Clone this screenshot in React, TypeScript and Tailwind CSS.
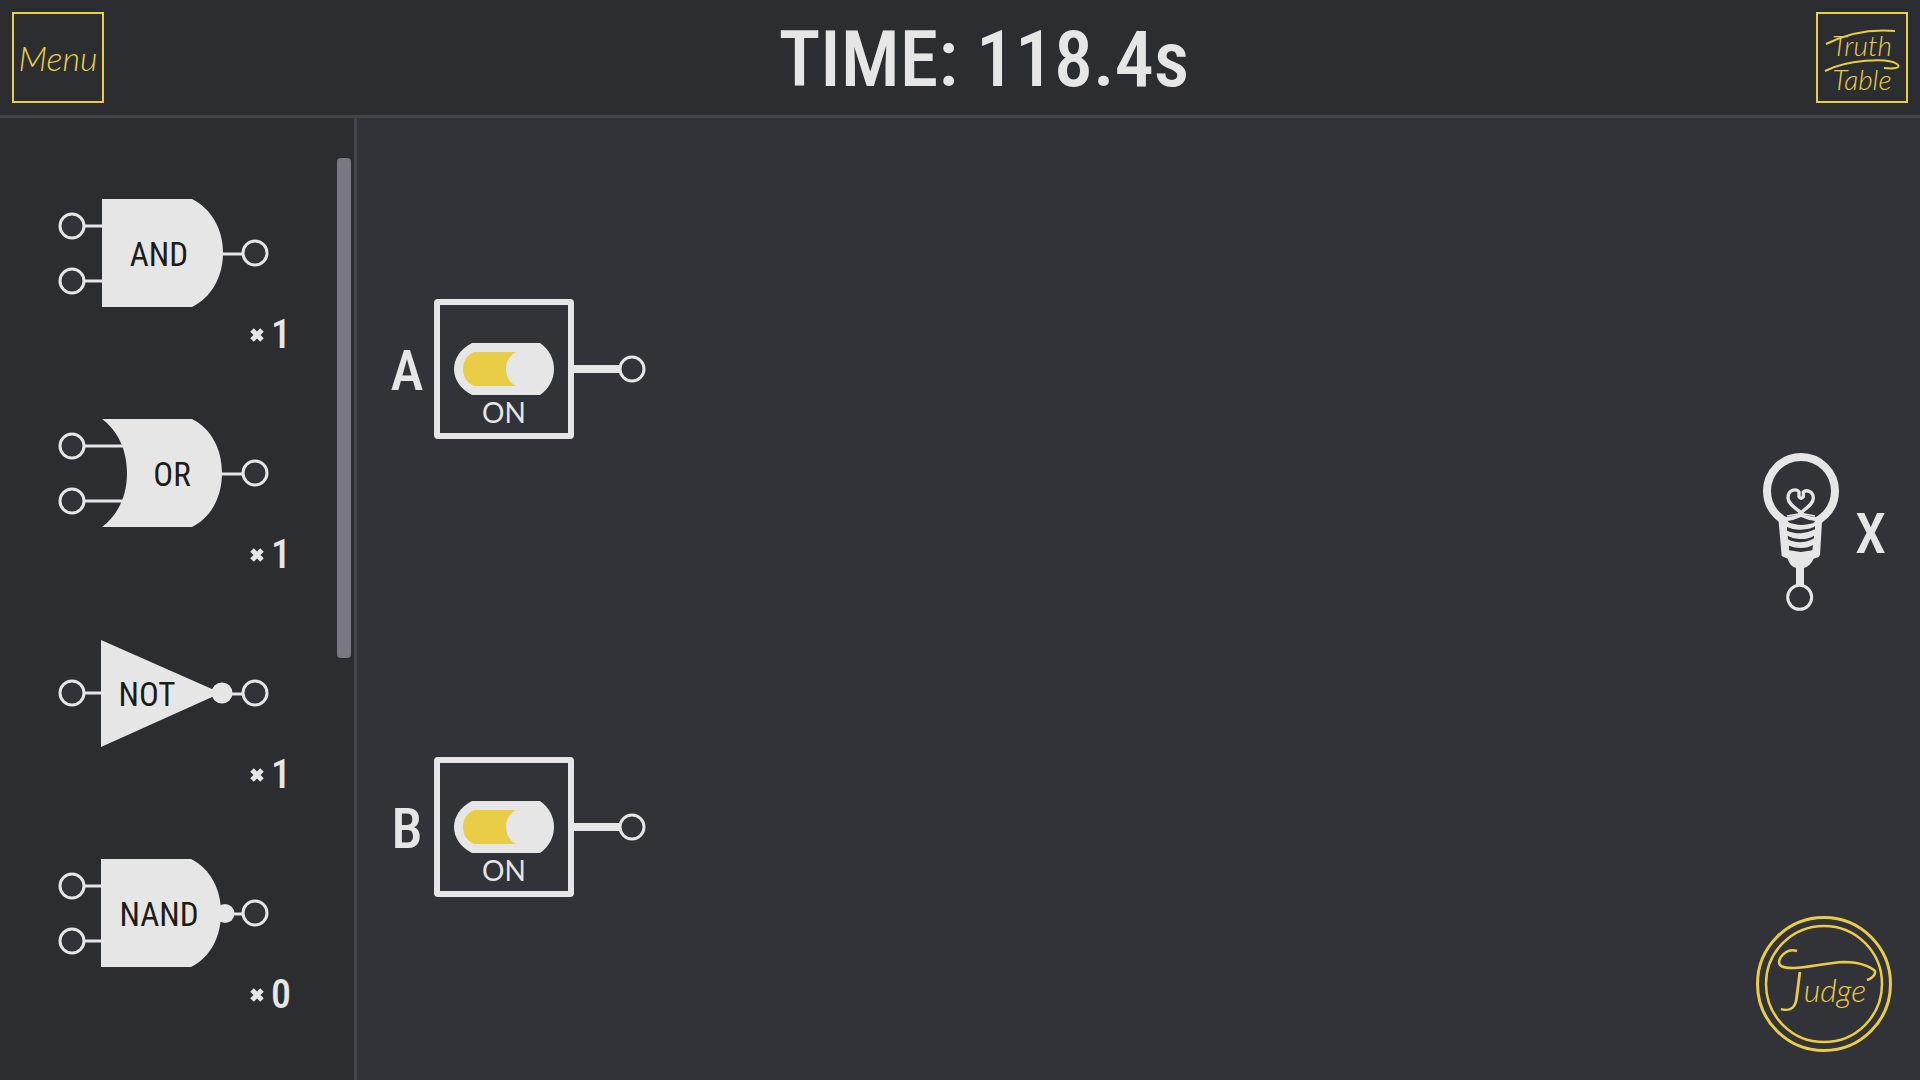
import React, { useState } from 'react';

type GateKind = 'AND' | 'OR' | 'NOT' | 'NAND';

interface GateItem {
  kind: GateKind;
  count: number;
  labelX: number;
}

const gates: GateItem[] = [
  { kind: 'AND', count: 1, labelX: 103 },
  { kind: 'OR', count: 1, labelX: 116 },
  { kind: 'NOT', count: 1, labelX: 91 },
  { kind: 'NAND', count: 0, labelX: 103 },
];

const shapes: Record<GateKind, string> = {
  AND: 'M46 1H136C156 11 167 32 167 55S156 99 136 109H46Z',
  OR: 'M46 1H136C156 11 166 32 166 55S156 99 136 109H46C62 97 71 78 71 55S62 13 46 1Z',
  NOT: 'M45 2L165 55L45 109Z',
  NAND: 'M45 1H135C155 11 165 32 165 55S155 99 135 109H45Z',
};

const Pin: React.FC<{ cx: number; cy: number }> = ({ cx, cy }) => (
  <circle cx={cx} cy={cy} r="12" fill="#323338" stroke="#e6e6e6" strokeWidth="3" />
);

const GateShape: React.FC<{ gate: GateItem }> = ({ gate }) => {
  const inputs = gate.kind === 'NOT' ? [55] : [28, 83];
  const wireEnd = gate.kind === 'OR' ? 70 : 50;

  return (
    <svg width="214" height="110" viewBox="0 0 214 110" className="block">
      {inputs.map((y) => (
        <g key={y}>
          <path d={`M28 ${y}H${wireEnd}`} stroke="#e6e6e6" strokeWidth="3" />
          <Pin cx={16} cy={y} />
        </g>
      ))}
      <path d="M160 56H188" stroke="#e6e6e6" strokeWidth="3" />
      <path d={shapes[gate.kind]} fill="#e6e6e6" />
      {gate.kind === 'NOT' && <circle cx="166" cy="55" r="10.5" fill="#e6e6e6" />}
      {gate.kind === 'NAND' && <circle cx="169" cy="55.5" r="9.5" fill="#e6e6e6" />}
      <Pin cx={199} cy={55} />
      <text x={gate.labelX} y="68" textAnchor="middle" fontSize="33" fill="#1c1d16">
        {gate.kind}
      </text>
    </svg>
  );
};

const Sidebar: React.FC = () => (
  <aside className="flex w-[357px] shrink-0 justify-between overflow-hidden border-r-3 border-[#424549] bg-[#2c2d31] pr-[3px]">
    <ul className="pt-20 pl-14">
      {gates.map((gate) => (
        <li key={gate.kind} className="h-[220px]">
          <button type="button" className="block cursor-grab">
            <GateShape gate={gate} />
            <span className="flex items-center gap-1.5 pl-[193px] text-[40px] leading-[54px] font-medium">
              <svg width="16" height="16" viewBox="0 0 16 16">
                <path d="M3 3L13 13M13 3L3 13" stroke="#e6e6e6" strokeWidth="5" />
              </svg>
              {gate.count}
            </span>
          </button>
        </li>
      ))}
    </ul>
    <div className="mt-10 h-[500px] w-[14px] rounded-sm bg-[#7a7983]" />
  </aside>
);

const InputSwitch: React.FC<{ name: string }> = ({ name }) => {
  const [on, setOn] = useState(true);

  return (
    <div className="flex items-center">
      <span className="w-[54px] pt-1 text-center text-[56px] leading-[56px] font-medium">{name}</span>
      <label className="flex h-[140px] w-[140px] cursor-pointer flex-col items-center rounded-sm border-6 border-[#e6e6e6] pt-[38px]">
        <input
          type="checkbox"
          className="sr-only"
          aria-label={name}
          checked={on}
          onChange={() => setOn(!on)}
        />
        <svg width="100" height="52" viewBox="0 0 100 52" className="block">
          <path d="M18 0H86C95 6 100 16 100 26S95 46 86 52H18C6 46 0 36 0 26S6 6 18 0Z" fill="#e6e6e6" />
          {on ? (
            <path d="M20 9H62C55 13 52 19 52 26S55 39 62 43H20C12 39 9 33 9 26S12 13 20 9Z" fill="#e9cd46" />
          ) : (
            <path d="M38 9H80C88 13 91 19 91 26S88 39 80 43H38C45 39 48 33 48 26S45 13 38 9Z" fill="#323338" />
          )}
        </svg>
        <span className="mt-[3px] font-[Lato,sans-serif] text-[28px] leading-7">{on ? 'ON' : 'OFF'}</span>
      </label>
      <svg width="72" height="30" viewBox="0 0 72 30" className="block">
        <path d="M0 15H48" stroke="#e6e6e6" strokeWidth="8" />
        <Pin cx={58} cy={15} />
      </svg>
    </div>
  );
};

const Bulb: React.FC = () => (
  <svg width="80" height="160" viewBox="60 66 240 480" fill="none" stroke="#e6e6e6">
    <circle cx="180" cy="183" r="102" strokeWidth="24" />
    <path d="M112 262Q150 264 180 250Q210 264 246 262V276H243L237 375L233 381L218 386Q208 408 189 414V465H165V414Q146 408 140 386L122 378L113 276Z" fill="#e6e6e6" stroke="none" />
    <path d="M180 248C160 232 141 220 141 204C141 176 168 176 174 186V200Q180 210 187 200V186C196 178 217 184 217 204C217 222 196 234 180 248Z" strokeWidth="10" />
    <path d="M138 258L172 252L180 246L190 252L222 258" strokeWidth="5" />
    <g fill="#323338" stroke="none">
      <path d="M140 273Q160 270 180 261Q200 270 222 273Q220 281 200 283Q180 287 160 282Q144 280 140 273Z" />
      <path d="M138 291Q160 301 180 299Q206 299 222 289V298Q202 308 180 310Q152 309 138 302Z" />
      <path d="M140 317Q160 329 180 327Q204 327 219 317V325Q200 337 176 337Q154 336 141 328Z" />
      <path d="M144 347Q160 354 180 354Q202 354 216 345L214 361L180 366L144 361Z" />
    </g>
    <circle cx="176" cy="502" r="36" fill="#323338" strokeWidth="9" />
  </svg>
);

const Header: React.FC = () => (
  <header className="flex h-[118px] shrink-0 items-start justify-between border-b-3 border-[#424549] bg-[#2c2d31] p-3">
    <button
      type="button"
      className="h-[91px] w-[92px] cursor-pointer border-2 border-[#e9cd46] font-[Lato,sans-serif] text-[34px] font-light text-[#e9cd46] italic"
    >
      Menu
    </button>
    <h1 className="pl-12 text-[78px] leading-[96px] font-medium">TIME: 118.4s</h1>
    <button
      type="button"
      className="relative flex h-[91px] w-[92px] cursor-pointer flex-col items-center justify-center border-2 border-[#e9cd46] pt-2 font-[Lato,sans-serif] text-[28px] leading-[34px] font-light text-[#e9cd46] italic"
    >
      <span>Truth</span>
      <span>Table</span>
      <svg
        width="88"
        height="87"
        viewBox="0 0 88 87"
        fill="none"
        stroke="#e9cd46"
        strokeWidth="2"
        className="absolute inset-0"
      >
        <path d="M8 30Q40 14 77 17" />
        <path d="M7 57C28 46 70 43 79 50C84 54 76 55 66 54" />
      </svg>
    </button>
  </header>
);

const JudgeButton: React.FC = () => (
  <button
    type="button"
    className="relative flex h-[136px] w-[136px] cursor-pointer items-center justify-center rounded-full border-3 border-[#e9cd46] font-[Lato,sans-serif] font-light text-[#e9cd46] italic"
  >
    <svg
      width="130"
      height="130"
      viewBox="1 1 130 130"
      fill="none"
      stroke="#e9cd46"
      strokeWidth="2.5"
      className="absolute inset-0"
    >
      <circle cx="66" cy="66" r="58" />
      <path d="M39 33C28 29 18 42 22 47C30 55 62 45 86 44C104 44 114 50 117 53C118 57 113 61 109 62" />
    </svg>
    <span className="flex items-center pt-3 text-[32px]">
      <span className="text-[56px] leading-[56px]">J</span>udge
    </span>
  </button>
);

const App: React.FC = () => (
  <div className="flex h-screen min-w-[900px] flex-col bg-[#323338] font-['Roboto_Condensed',Roboto,sans-serif] text-[#e6e6e6]">
    <Header />
    <div className="flex min-h-0 flex-1">
      <Sidebar />
      <main className="flex flex-1 justify-between">
        <section className="flex flex-col gap-[318px] pt-[181px] pl-[23px]">
          <InputSwitch name="A" />
          <InputSwitch name="B" />
        </section>
        <section className="flex flex-col items-end justify-between pt-[334px] pr-7 pb-7">
          <div className="flex items-center gap-3.5 pr-1.5">
            <Bulb />
            <span className="pt-1 text-[56px] leading-[56px] font-medium">X</span>
          </div>
          <JudgeButton />
        </section>
      </main>
    </div>
  </div>
);

export default App;
